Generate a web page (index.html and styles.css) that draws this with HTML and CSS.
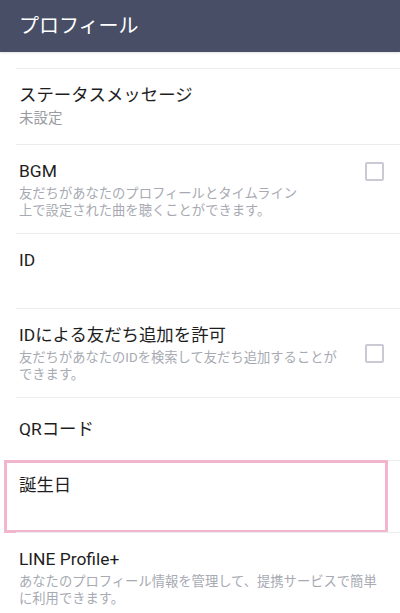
FILE: index.html
```html
<!DOCTYPE html>
<html lang="ja">
<head>
<meta charset="utf-8">
<title>プロフィール</title>
<link rel="stylesheet" href="styles.css">
</head>
<body>
<header class="appbar"><h1 class="appbar-title">プロフィール</h1></header>
<main class="list">
  <section class="row row-status">
    <div class="row-text">
      <div class="title">ステータスメッセージ</div>
      <div class="value">未設定</div>
    </div>
  </section>
  <section class="row row-tall">
    <div class="row-text">
      <div class="title">BGM</div>
      <div class="desc">友だちがあなたのプロフィールとタイムライン<br>上で設定された曲を聴くことができます。</div>
    </div>
    <span class="checkbox checkbox-top"></span>
  </section>
  <section class="row row-id">
    <div class="row-text">
      <div class="title">ID</div>
      <div class="value"></div>
    </div>
  </section>
  <section class="row row-tall">
    <div class="row-text">
      <div class="title">IDによる友だち追加を許可</div>
      <div class="desc">友だちがあなたのIDを検索して友だち追加することが<br>できます。</div>
    </div>
    <span class="checkbox checkbox-mid"></span>
  </section>
  <section class="row row-single">
    <div class="row-text">
      <div class="title">QRコード</div>
    </div>
  </section>
  <section class="row row-highlight">
    <div class="row-text">
      <div class="title">誕生日</div>
      <div class="value"></div>
    </div>
  </section>
  <section class="row row-tall">
    <div class="row-text">
      <div class="title">LINE Profile+</div>
      <div class="desc">あなたのプロフィール情報を管理して、提携サービスで簡単<br>に利用できます。</div>
    </div>
  </section>
</main>
</body>
</html>
```

FILE: styles.css
```css
* { box-sizing: border-box; }
html, body { margin: 0; padding: 0; }
body {
  width: 400px;
  height: 613px;
  overflow: hidden;
  background: #ffffff;
  font-family: Roboto, "Noto Sans CJK JP", sans-serif;
  color: #1e1e1e;
}
.appbar {
  height: 52px;
  background: #474e66;
  display: flex;
  align-items: center;
  padding-left: 19px;
  box-shadow: 0 1px 2px rgba(0,0,0,0.12);
  position: relative;
  z-index: 1;
}
.appbar-title {
  margin: 0;
  font-size: 20px;
  font-weight: 400;
  color: #ffffff;
  line-height: 24px;
}
.list {
  padding-top: 16px;
}
.row {
  margin-left: 16px;
  padding: 14px 16px 14px 3px;
  border-top: 1px solid #ececef;
  display: flex;
  align-items: flex-start;
  position: relative;
}
.row-text { flex: 1; min-width: 0; }
.title {
  font-size: 17.4px;
  line-height: 24px;
  color: #1e1e1e;
}
.value {
  font-size: 14.5px;
  line-height: 24px;
  height: 24px;
  color: #9a9ca3;
}
.desc {
  margin-top: 2px;
  font-size: 13.3px;
  line-height: 17px;
  color: #a7aab2;
  white-space: nowrap;
}
.row-status { padding-bottom: 13px; }
.row-id { padding-bottom: 12px; }
.row-tall { padding-bottom: 14px; }
.row-single { padding-top: 19px; padding-bottom: 19px; }
.checkbox {
  display: block;
  width: 19px;
  height: 19px;
  border: 2px solid #c9cad3;
  border-radius: 2px;
  flex: none;
  margin-left: 8px;
}
.checkbox-top { margin-top: 3px; }
.checkbox-mid { margin-top: 21px; }
.row-highlight { padding-top: 12px; padding-bottom: 11px; }
.row-highlight::after {
  content: "";
  position: absolute;
  left: -12px;
  right: 12px;
  top: -1px;
  bottom: -1px;
  border: 3px solid #f1b6cd;
  pointer-events: none;
}
```
